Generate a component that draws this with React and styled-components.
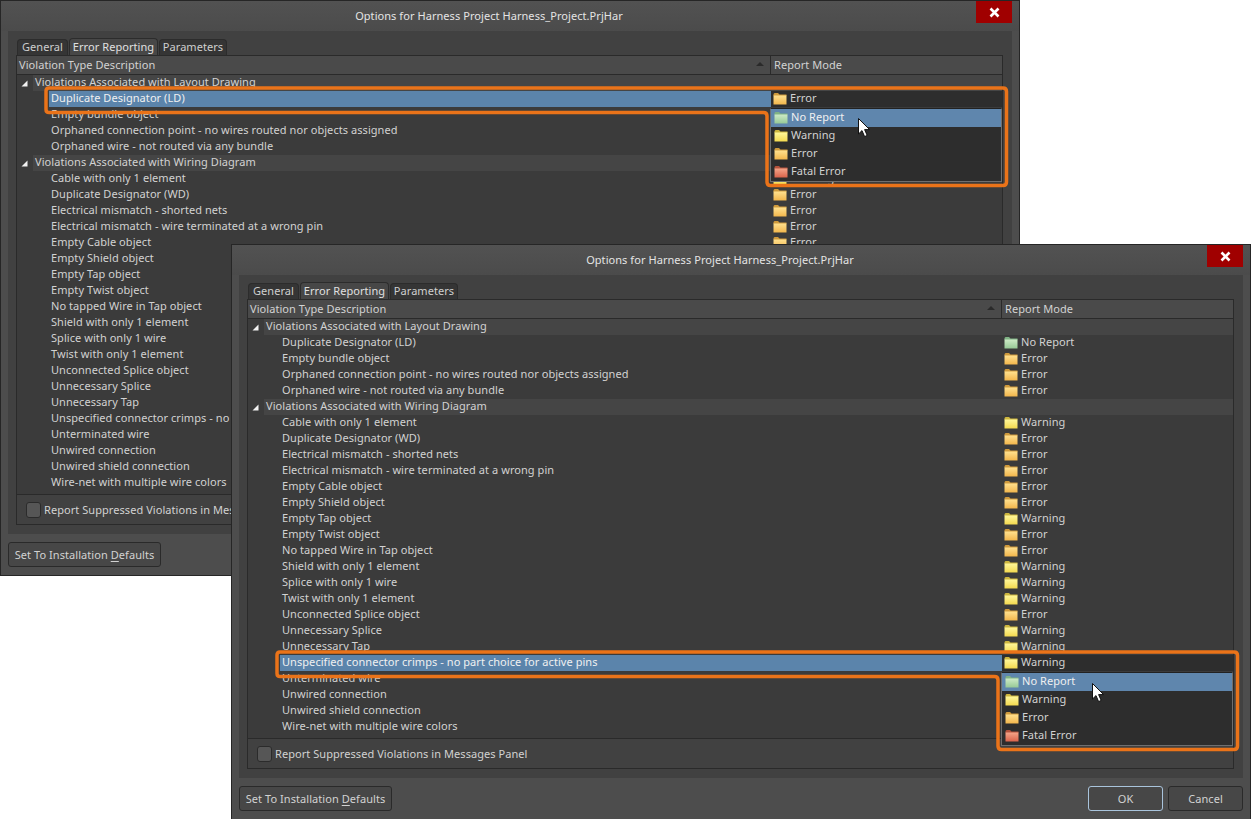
import React from "react";
import styled, { createGlobalStyle } from "styled-components";

const LAYOUT_RULES = [
  ["Duplicate Designator (LD)", "Error"],
  ["Empty bundle object", "Error"],
  ["Orphaned connection point - no wires routed nor objects assigned", "Error"],
  ["Orphaned wire - not routed via any bundle", "Error"],
];

const WIRING_RULES = [
  ["Cable with only 1 element", "Warning"],
  ["Duplicate Designator (WD)", "Error"],
  ["Electrical mismatch - shorted nets", "Error"],
  ["Electrical mismatch - wire terminated at a wrong pin", "Error"],
  ["Empty Cable object", "Error"],
  ["Empty Shield object", "Error"],
  ["Empty Tap object", "Warning"],
  ["Empty Twist object", "Error"],
  ["No tapped Wire in Tap object", "Error"],
  ["Shield with only 1 element", "Warning"],
  ["Splice with only 1 wire", "Warning"],
  ["Twist with only 1 element", "Warning"],
  ["Unconnected Splice object", "Error"],
  ["Unnecessary Splice", "Warning"],
  ["Unnecessary Tap", "Warning"],
  ["Unspecified connector crimps - no part choice for active pins", "Warning"],
  ["Unterminated wire", "Error"],
  ["Unwired connection", "Error"],
  ["Unwired shield connection", "Error"],
  ["Wire-net with multiple wire colors", "Error"],
];

const FOLDER_COLORS = {
  "No Report": { id: "fNone", tab: "#7fb284", top: "#cdeac6", bottom: "#97c996" },
  Warning: { id: "fWarn", tab: "#cdb63e", top: "#fff79a", bottom: "#f3d94f" },
  Error: { id: "fErr", tab: "#cf9a3c", top: "#ffe08e", bottom: "#f2b64c" },
  "Fatal Error": { id: "fFatal", tab: "#b5523c", top: "#f4a488", bottom: "#d9634a" },
};

const Folder = ({ mode }) => {
  const { id, tab, top, bottom } = FOLDER_COLORS[mode];
  return (
    <FolderSvg viewBox="0 0 14 13">
      <defs>
        <linearGradient id={id} x1="0" y1="0" x2="0" y2="1">
          <stop offset="0" stopColor={top} />
          <stop offset="1" stopColor={bottom} />
        </linearGradient>
      </defs>
      <path d="M0.5 4 V2 L1.5 1 H5 L6.5 2.5 H13.5 V4 Z" fill={tab} />
      <path d="M0.5 3.5 H13.5 V12.5 H0.5 Z" fill={`url(#${id})`} />
    </FolderSvg>
  );
};

const Toggle = () => (
  <ToggleSvg viewBox="0 0 7 7">
    <polygon points="6.5,0.5 6.5,6.5 0.5,6.5" fill="#f2f2f2" />
  </ToggleSvg>
);

const Callout = () => (
  <CalloutSvg width="970" height="106" viewBox="0 0 970 106">
    <path
      d="M5 2 H959 Q962.5 2 962.5 5.5 V96 Q962.5 99.5 959 99.5 H726.5 Q723 99.5 723 96 V30 Q723 26.5 719.5 26.5 H5 Q2 26.5 2 23.5 V5 Q2 2 5 2 Z"
      fill="none"
      stroke="#ea7319"
      strokeWidth="3.5"
    />
  </CalloutSvg>
);

const Cursor = ({ front }) => (
  <CursorSvg $front={front} viewBox="0 0 13 20">
    <path
      d="M0.5 0.5 V16 L4 12.6 L6.6 18.6 L9.2 17.4 L6.6 11.6 H11.6 Z"
      fill="#fff"
      stroke="#111"
      strokeWidth="1"
    />
  </CursorSvg>
);

const ModeList = ({ front }) => (
  <Dropdown>
    {["No Report", "Warning", "Error", "Fatal Error"].map((mode, i) => (
      <DropdownItem key={mode} $hover={i === 0}>
        <Folder mode={mode} />
        {mode}
      </DropdownItem>
    ))}
    <Cursor front={front} />
  </Dropdown>
);

const RuleRow = ({ name, mode, open, front }) => (
  <Row $open={open}>
    <RuleName $open={open}>{name}</RuleName>
    <ModeCell $open={open}>
      <Folder mode={mode} />
      {mode}
    </ModeCell>
    {open && <Callout />}
    {open && <ModeList front={front} />}
  </Row>
);

const Dialog = ({ front, openRule, overrides }) => {
  const renderRule = ([name, mode]) => (
    <RuleRow
      key={name}
      name={name}
      mode={overrides[name] || mode}
      open={name === openRule}
      front={front}
    />
  );

  return (
    <Window $front={front}>
      <TitleBar>
        Options for Harness Project Harness_Project.PrjHar
        <CloseButton>
          <svg width="11" height="11" viewBox="0 0 11 11">
            <path d="M1.5 1.5 L9.5 9.5 M9.5 1.5 L1.5 9.5" stroke="#fff" strokeWidth="2.6" />
          </svg>
        </CloseButton>
      </TitleBar>
      <Panel>
        <Tabs>
          <Tab $width={51}>General</Tab>
          <Tab $width={89} $active>
            Error Reporting
          </Tab>
          <Tab $width={68}>Parameters</Tab>
        </Tabs>
        <Frame>
          <TableHeader>
            <HeaderName>
              Violation Type Description
              <SortArrow />
            </HeaderName>
            <HeaderMode>Report Mode</HeaderMode>
          </TableHeader>
          <RuleList>
            <GroupRow>
              <Toggle />
              <GroupLabel>Violations Associated with Layout Drawing</GroupLabel>
            </GroupRow>
            {LAYOUT_RULES.map(renderRule)}
            <GroupRow>
              <Toggle />
              <GroupLabel>Violations Associated with Wiring Diagram</GroupLabel>
            </GroupRow>
            {WIRING_RULES.map(renderRule)}
          </RuleList>
          <OptionRow>
            <CheckBox />
            Report Suppressed Violations in Messages Panel
          </OptionRow>
        </Frame>
      </Panel>
      <Footer>
        <Button>
          Set To Installation <u>D</u>efaults
        </Button>
        {front && (
          <FooterRight>
            <DialogButton $primary>OK</DialogButton>
            <DialogButton>Cancel</DialogButton>
          </FooterRight>
        )}
      </Footer>
    </Window>
  );
};

export default function App() {
  return (
    <>
      <GlobalStyle />
      <Desktop>
        <Dialog openRule="Duplicate Designator (LD)" overrides={{}} />
        <Dialog
          front
          openRule="Unspecified connector crimps - no part choice for active pins"
          overrides={{ "Duplicate Designator (LD)": "No Report" }}
        />
      </Desktop>
    </>
  );
}

const GlobalStyle = createGlobalStyle`
  html, body {
    margin: 0;
    background: #fff;
  }
`;

const Desktop = styled.div`
  position: relative;
  width: 1251px;
  height: 819px;
  overflow: hidden;
  background: #fff;
  font-family: "Noto Sans", "Open Sans", sans-serif;
  font-size: 11px;
  line-height: 14px;
  letter-spacing: 0.06px;
  color: #d2d2d2;
`;

const Window = styled.div`
  position: absolute;
  left: ${(p) => (p.$front ? "231px" : "0")};
  top: ${(p) => (p.$front ? "244px" : "0")};
  box-sizing: border-box;
  width: 1020px;
  height: 576px;
  display: flex;
  flex-direction: column;
  background: #4d4d4d;
  border: 1px solid #262626;
`;

const TitleBar = styled.div`
  position: relative;
  height: 30px;
  flex: none;
  box-sizing: border-box;
  padding: 0 42px 1px 0;
  display: flex;
  align-items: center;
  justify-content: center;
  letter-spacing: 0.06px;
  color: #e4e4e4;
  background: linear-gradient(#525252, #4b4b4b);
`;

const CloseButton = styled.div`
  position: absolute;
  top: 0;
  right: 7px;
  width: 36px;
  height: 22px;
  display: flex;
  align-items: center;
  justify-content: center;
  background: #a00000;
`;

const Panel = styled.div`
  margin: 0 7px;
  height: 503px;
  flex: none;
  box-sizing: border-box;
  padding: 8px 9px 9px 8px;
  display: flex;
  flex-direction: column;
  background: #414141;
`;

const Tabs = styled.div`
  height: 16px;
  flex: none;
  display: flex;
  align-items: flex-end;
  gap: 1px;
  padding-left: 1px;
`;

const Tab = styled.div`
  box-sizing: border-box;
  width: ${(p) => p.$width}px;
  height: ${(p) => (p.$active ? "17px" : "16px")};
  padding-bottom: 1px;
  display: flex;
  align-items: center;
  justify-content: center;
  white-space: nowrap;
  border: 1px solid #2c2c2c;
  border-bottom: 0;
  border-radius: 4px 4px 0 0;
  color: ${(p) => (p.$active ? "#e0e0e0" : "#cfcfcf")};
  background: ${(p) => (p.$active ? "#474747" : "#353535")};
`;

const Frame = styled.div`
  flex: 1;
  min-height: 0;
  display: flex;
  flex-direction: column;
  border: 1px solid #2a2a2a;
  border-top: 0;
`;

const TableHeader = styled.div`
  height: 18px;
  flex: none;
  display: flex;
  border-top: 1px solid #2a2a2a;
  border-bottom: 1px solid #2a2a2a;
  background: #4a4a4a;
`;

const HeaderName = styled.div`
  position: relative;
  width: 754px;
  flex: none;
  box-sizing: border-box;
  padding-left: 2px;
  display: flex;
  align-items: center;
  border-right: 1px solid #2a2a2a;
`;

const SortArrow = styled.span`
  position: absolute;
  right: 6px;
  top: 6px;
  width: 0;
  height: 0;
  border-left: 4px solid transparent;
  border-right: 4px solid transparent;
  border-bottom: 4px solid #2a2a2a;
`;

const HeaderMode = styled.div`
  flex: 1;
  padding-left: 3px;
  display: flex;
  align-items: center;
`;

const RuleList = styled.div`
  flex: 1;
  min-height: 0;
  background: #3b3b3b;
`;

const GroupRow = styled.div`
  height: 16px;
  display: flex;
  align-items: center;
`;

const ToggleSvg = styled.svg`
  width: 7px;
  height: 7px;
  margin-left: 4px;
  margin-right: 5px;
  flex: none;
`;

const GroupLabel = styled.div`
  flex: 1;
  height: 16px;
  box-sizing: border-box;
  padding: 0 0 2px 2px;
  display: flex;
  align-items: center;
  background: #454545;
`;

const Row = styled.div`
  position: relative;
  z-index: ${(p) => (p.$open ? 2 : "auto")};
  height: 16px;
  display: flex;
  align-items: center;
`;

const RuleName = styled.div`
  width: 722px;
  margin-left: 32px;
  flex: none;
  box-sizing: border-box;
  height: 16px;
  padding: 0 0 2px 2px;
  display: flex;
  align-items: center;
  white-space: nowrap;
  color: ${(p) => (p.$open ? "#f0f0f0" : "inherit")};
  background: ${(p) => (p.$open ? "#5b84ab" : "transparent")};
`;

const ModeCell = styled.div`
  flex: 1;
  height: 16px;
  box-sizing: border-box;
  padding: 0 0 2px 2px;
  display: flex;
  align-items: center;
  gap: 3px;
  background: ${(p) => (p.$open ? "#2d2d2d" : "transparent")};
`;

const FolderSvg = styled.svg`
  width: 14px;
  height: 13px;
  flex: none;
`;

const CalloutSvg = styled.svg`
  position: absolute;
  left: 27px;
  top: -5px;
  pointer-events: none;
`;

const Dropdown = styled.div`
  position: absolute;
  top: 17px;
  right: 0;
  width: 232px;
  box-sizing: border-box;
  height: 74px;
  background: #2d2d2d;
  border: 1px solid #6f6f6f;
  border-top-color: #222;
`;

const DropdownItem = styled.div`
  height: 18px;
  box-sizing: border-box;
  padding: 0 0 2px 3px;
  display: flex;
  align-items: center;
  gap: 3px;
  color: ${(p) => (p.$hover ? "#f0f0f0" : "inherit")};
  background: ${(p) => (p.$hover ? "#5f86ad" : "transparent")};
`;

const CursorSvg = styled.svg`
  position: absolute;
  left: ${(p) => (p.$front ? "90px" : "87px")};
  top: ${(p) => (p.$front ? "10px" : "9px")};
  width: 13px;
  height: 20px;
`;

const OptionRow = styled.div`
  height: 29px;
  flex: none;
  display: flex;
  align-items: center;
  gap: 3px;
  padding-left: 9px;
  border-top: 1px solid #2a2a2a;
`;

const CheckBox = styled.div`
  box-sizing: border-box;
  width: 15px;
  height: 16px;
  border: 1px solid #2b2b2b;
  border-radius: 3px;
  background: #565656;
`;

const Footer = styled.div`
  flex: 1;
  display: flex;
  align-items: flex-start;
  justify-content: space-between;
  padding: 8px 7px 0;
`;

const FooterRight = styled.div`
  display: flex;
  gap: 5px;
`;

const Button = styled.div`
  box-sizing: border-box;
  height: 25px;
  width: 153px;
  display: flex;
  align-items: center;
  justify-content: center;
  white-space: pre;
  border: 1px solid #2a2a2a;
  border-radius: 3px;
  background: #474747;
  u {
    text-underline-offset: 2px;
  }
`;

const DialogButton = styled(Button)`
  width: 75px;
  border-color: ${(p) => (p.$primary ? "#a9c4dc" : "#2a2a2a")};
`;
